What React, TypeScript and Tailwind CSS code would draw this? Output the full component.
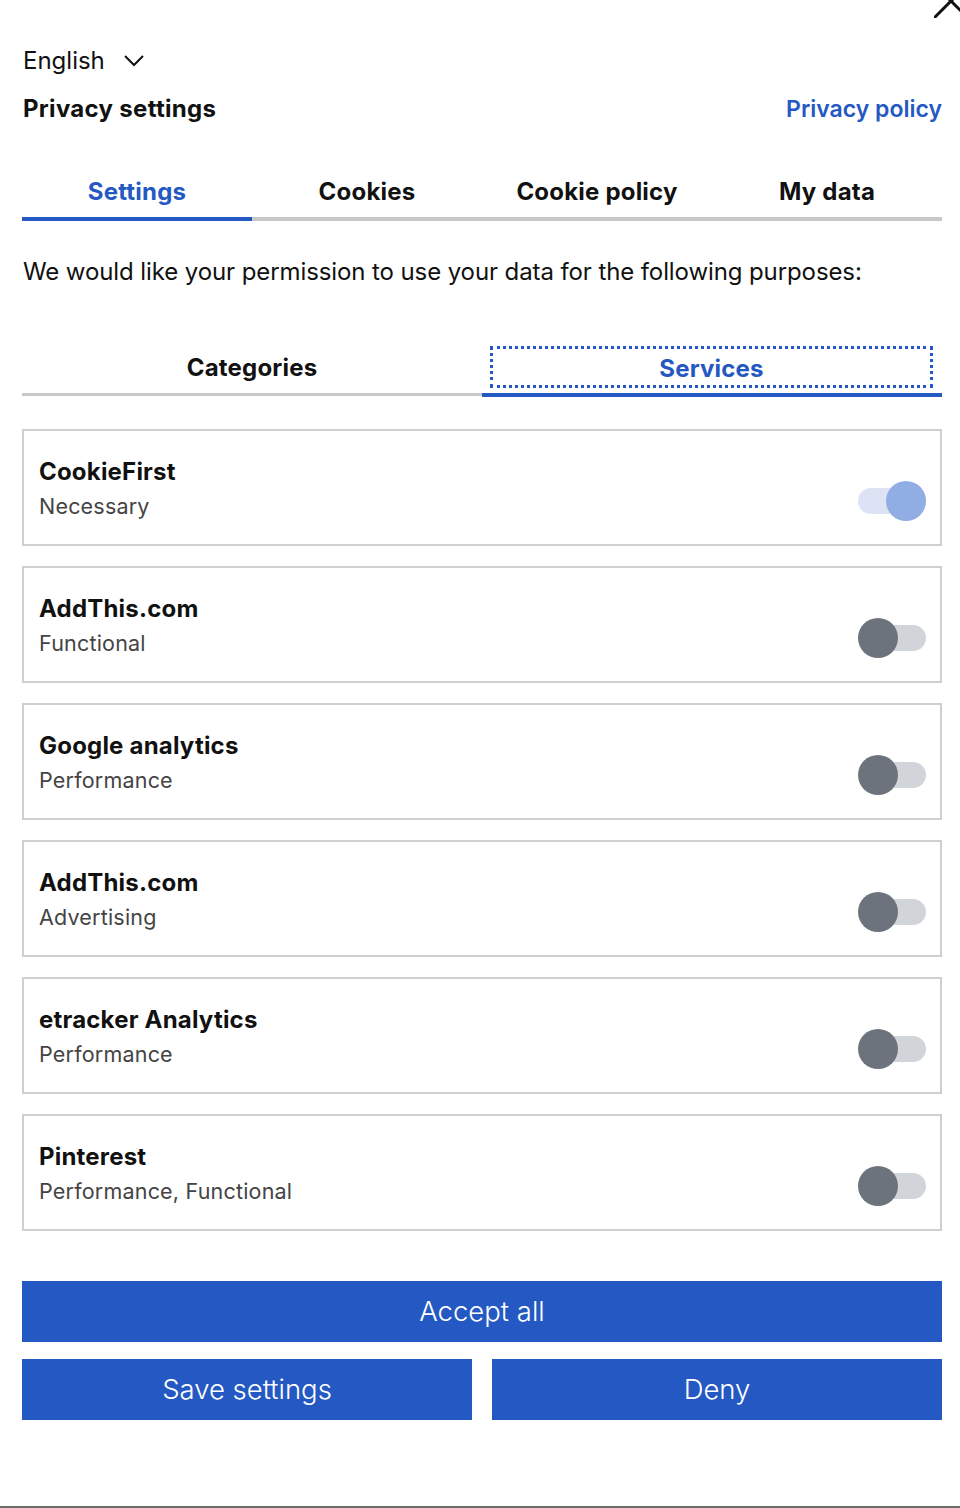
import { useState } from "react";

const services = [
  { name: "CookieFirst", purpose: "Necessary", on: true },
  { name: "AddThis.com", purpose: "Functional", on: false },
  { name: "Google analytics", purpose: "Performance", on: false },
  { name: "AddThis.com", purpose: "Advertising", on: false },
  { name: "etracker Analytics", purpose: "Performance", on: false },
  { name: "Pinterest", purpose: "Performance, Functional", on: false },
];

const tabs = ["Settings", "Cookies", "Cookie policy", "My data"];

function Toggle({ on }: { on: boolean }) {
  return (
    <div className="relative h-10 w-[68px] shrink-0">
      <div
        className={
          on
            ? "absolute left-0 right-0 top-[7px] h-[26px] rounded-full bg-[#dde3f5]"
            : "absolute left-[12px] right-0 top-[7px] h-[26px] rounded-full bg-[#d1d5da]"
        }
      />
      <div
        className={
          on
            ? "absolute right-0 top-0 h-10 w-10 rounded-full bg-[#90aee3]"
            : "absolute left-0 top-0 h-10 w-10 rounded-full bg-[#6c737c]"
        }
      />
    </div>
  );
}

export default function App() {
  const [tab] = useState(0);

  return (
    <div className="relative h-[1508px] overflow-hidden border-b-2 border-[#6b6b6b] bg-white pl-[22px] pr-[18px] font-['Inter',sans-serif] text-[#111]">
      {/* close button, mostly off the top edge */}
      <svg
        className="absolute right-[-8px] top-[-16px]"
        width="34"
        height="34"
        viewBox="0 0 34 34"
        fill="none"
        stroke="#111"
        strokeWidth="3"
      >
        <path d="M0 34 L34 0 M0 0 L34 34" />
      </svg>

      <div className="flex items-center gap-[19px] pl-px pt-[46px] text-[24px] leading-[30px]">
        English
        <svg width="20" height="12" viewBox="0 0 20 12" fill="none" stroke="#111" strokeWidth="2">
          <path d="M1 1 L10 10 L19 1" />
        </svg>
      </div>

      <div className="mt-[18px] flex items-center justify-between">
        <h1 className="pl-px text-[24px] font-bold leading-[30px] tracking-[0.3px]">Privacy settings</h1>
        <a className="text-[23px] font-semibold leading-[30px] text-[#2459c3]">Privacy policy</a>
      </div>

      <div className="mt-[53px] grid grid-cols-4">
        {tabs.map((t, i) => (
          <div
            key={t}
            className={
              i === tab
                ? "border-b-4 border-[#2459c3] pb-[10px] text-center text-[24px] font-bold leading-[30px] tracking-[0.2px] text-[#2459c3]"
                : "border-b-4 border-[#c8c8c8] pb-[10px] text-center text-[24px] font-bold leading-[30px] tracking-[0.2px]"
            }
          >
            {t}
          </div>
        ))}
      </div>

      <p className="mt-[36px] pl-px text-[24px] leading-[30px] tracking-[-0.1px]">
        We would like your permission to use your data for the following purposes:
      </p>

      <div className="mt-[59px] grid grid-cols-2 items-start">
        <div className="h-[50px] border-b-[3px] border-[#c8c8c8] pt-[7px] text-center text-[24px] font-bold leading-[30px] tracking-[0.2px]">
          Categories
        </div>
        <div className="h-[51px] border-b-4 border-[#2459c3] pl-2 pr-[9px]">
          <div className="h-[42px] border-[3px] border-dotted border-[#2459c3] pt-[5px] text-center text-[24px] font-bold leading-[30px] tracking-[0.2px] text-[#2459c3]">
            Services
          </div>
        </div>
      </div>

      <div className="mt-[32px] flex flex-col gap-5">
        {services.map((s, i) => (
          <div
            key={i}
            className="flex h-[117px] items-end justify-between border-2 border-[#cfcfcf] pb-[23px] pl-[15px] pr-[14px]"
          >
            <div className="self-start pt-[25px]">
              <div className="text-[24px] font-bold leading-[32px] tracking-[0.2px]">{s.name}</div>
              <div className="mt-[2px] text-[21.5px] leading-[32px] tracking-[0.2px] text-[#444]">{s.purpose}</div>
            </div>
            <Toggle on={s.on} />
          </div>
        ))}
      </div>

      <div className="mt-[50px] flex flex-col gap-[17px]">
        <button className="h-[61px] w-full bg-[#2459c3] text-[27.5px] font-light text-white">Accept all</button>
        <div className="grid grid-cols-2 gap-5">
          <button className="h-[61px] bg-[#2459c3] text-[27.5px] font-light text-white">Save settings</button>
          <button className="h-[61px] bg-[#2459c3] text-[27.5px] font-light text-white">Deny</button>
        </div>
      </div>
    </div>
  );
}
